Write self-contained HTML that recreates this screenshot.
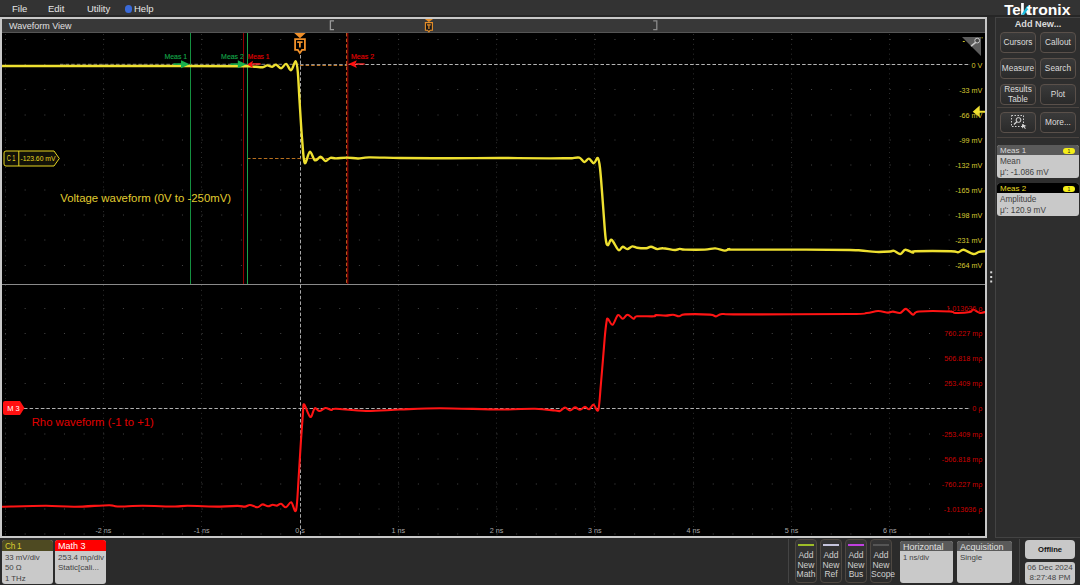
<!DOCTYPE html>
<html><head><meta charset="utf-8">
<style>
*{margin:0;padding:0;box-sizing:border-box}
html,body{width:1080px;height:585px;overflow:hidden;background:#2b2b2b;font-family:"Liberation Sans",sans-serif}
.a{position:absolute}
#menu{left:0;top:0;width:1080px;height:15px;background:#333}
#menu span{position:absolute;top:2.8px;font-size:9.5px;color:#e6e6e6;line-height:12px}
#wv{left:0;top:17px;width:987px;height:521px;background:#c8c8c8}
#title{left:2px;top:19px;width:983px;height:14px;background:#383838;border-bottom:1px solid #555}
#title span{position:absolute;left:7px;top:1px;font-size:9px;color:#e0e0e0;line-height:12px}
#plot{left:2px;top:33px;width:983px;height:503px;background:#000}
#rp{left:995px;top:17px;width:85px;height:521px;background:#2e2e2e;border:1px solid #434343;border-right:none}
.btn{position:absolute;width:36px;height:21px;border:1px solid #5a504a;border-radius:4px;background:linear-gradient(#3a3a3a,#2a2a2a);color:#dcdcdc;font-size:8.3px;text-align:center;line-height:19px}
.badge{position:absolute;background:#c9c9c9;border-radius:3px;overflow:hidden;color:#424242;font-size:8.2px;line-height:10px}
.badge .h{height:10px;padding-left:3px;line-height:10px;font-size:8px}
.badge .b{padding-left:3px}
.addb{position:absolute;top:539px;width:22px;height:44px;border:1px solid #4e4842;border-radius:4px;background:linear-gradient(#353535,#2b2b2b);color:#d0d0d0;font-size:8.5px;text-align:center;line-height:9.5px}
.addb i{display:block;height:2px;margin:3.5px 2px 5.5px 2px}
</style></head><body>
<div id="menu" class="a">
<span style="left:12px">File</span>
<span style="left:48px">Edit</span>
<span style="left:87px">Utility</span>
<span style="left:124.5px;top:5px;width:7.5px;height:7.5px;border-radius:50%;background:#3a6ad8"></span>
<span style="left:134px">Help</span>
</div>
<div class="a" style="left:0;top:15px;width:1080px;height:2px;background:#262626"></div>
<div id="wv" class="a"></div>
<div id="title" class="a"><span>Waveform View</span></div>
<div id="plot" class="a"></div>

<svg class="a" style="left:0;top:0" width="1080" height="585" viewBox="0 0 1080 585" font-family="Liberation Sans">
<defs><clipPath id="pc"><rect x="2" y="33" width="983" height="503"/></clipPath></defs>
<!-- title bar overview -->
<path d="M334 20.9h-3.6v8.8h3.6" fill="none" stroke="#9a9a9a" stroke-width="1.3"/>
<path d="M653.2 20.9h3.6v8.8h-3.6" fill="none" stroke="#8a8a8a" stroke-width="1.3"/>
<path d="M424.8 19h8.2l-4.1 3z" fill="#e8902a"/>
<path d="M425.4 22.6h7v7.6h-2.2l-1.3 1.6l-1.3-1.6h-2.2z" fill="#1a1a1a" stroke="#e8902a" stroke-width="1.1"/>
<path d="M427 24.3h3.8v1.2h-1.3v3.4h-1.2v-3.4h-1.3z" fill="#e8902a"/>
<g clip-path="url(#pc)">
<!-- vertical graticule dotted lines -->
<g stroke="#2e2e2e" stroke-width="1" stroke-dasharray="1 3.92">
<path d="M5.5 34V536M103.5 34V536M201.5 34V536M398.5 34V536M496.5 34V536M594.5 34V536M693.5 34V536M791.5 34V536M889.5 34V536"/>
</g>
<!-- horizontal dot rows -->
<g stroke="#474747" stroke-width="1" stroke-dasharray="1 18.66">
<path d="M5 39.5H985M5 64.5H985M5 89.5H985M5 115H985M5 140H985M5 165H985M5 190H985M5 215H985M5 240H985M5 265.5H985"/>
<path d="M5 308.5H985M5 333.5H985M5 358.5H985M5 383.5H985M5 408.5H985M5 434H985M5 459H985M5 484H985M5 509H985M5 534H985"/>
</g>
<!-- divider -->
<path d="M2 284.5H985" stroke="#8a8a8a" stroke-width="1.2"/>
<!-- trigger vertical dashed -->
<path d="M300.5 55V536" stroke="#a8a8a8" stroke-width="1" stroke-dasharray="3.5 2.1"/>
<!-- 0V dashed -->
<path d="M60 64.3H300" stroke="#808080" stroke-width="1" stroke-dasharray="3.5 2.1"/>
<path d="M348.5 64.5H968.6" stroke="#b4b4b4" stroke-width="1" stroke-dasharray="3.5 2.1"/>
<path d="M300 64.5H347" stroke="#8c8c8c" stroke-width="1" stroke-dasharray="3.5 2.1"/>
<path d="M300 65.5H347" stroke="#c07828" stroke-width="1.2" stroke-dasharray="3.5 2.1"/>
<path d="M247 158.5H345" stroke="#b8701f" stroke-width="1" stroke-dasharray="3.5 2.1"/>
<!-- 0 rho dashed -->
<path d="M24 408.5H969.5" stroke="#b0b0b0" stroke-width="1" stroke-dasharray="3.5 2.1"/>
<!-- meas gates -->
<path d="M190.5 33V284" stroke="#159040" stroke-width="1"/>
<path d="M243.5 33V284" stroke="#900000" stroke-width="1"/>
<path d="M247.5 33V284" stroke="#18a448" stroke-width="1"/>
<path d="M346.6 33V284" stroke="#c86020" stroke-width="1" stroke-dasharray="3.5 2.1"/>
<path d="M347.8 33V284" stroke="#c00000" stroke-width="0.9"/>
<!-- yellow waveform -->
<path fill="none" stroke="#eee030" stroke-width="2.4" stroke-linejoin="round" d="M2.0 66.0C13.3 66.0 40.3 66.0 70.0 66.0C99.7 66.0 150.8 66.0 180.0 66.0C209.2 66.0 233.3 66.1 245.0 66.2C256.7 66.3 248.2 66.3 250.0 66.4C251.8 66.5 253.9 66.7 256.0 66.8C258.1 66.9 260.9 67.4 262.8 67.2C264.7 67.0 265.6 65.5 267.2 65.4C268.8 65.3 270.7 66.8 272.2 66.7C273.7 66.6 274.6 64.3 276.1 64.6C277.6 64.9 279.4 68.4 281.1 68.3C282.8 68.2 284.4 63.6 286.1 63.9C287.8 64.2 289.5 70.7 291.1 70.2C292.7 69.8 294.5 60.9 295.6 61.2C296.7 61.5 297.2 65.5 297.8 72.0C298.4 78.5 298.8 89.0 299.5 100.0C300.2 111.0 301.1 127.5 302.0 138.0C302.9 148.5 303.4 160.7 304.7 163.0C306.0 165.3 308.1 152.2 309.8 151.8C311.5 151.4 313.2 159.5 315.0 160.3C316.8 161.1 318.9 156.7 320.6 156.8C322.4 156.9 323.9 160.9 325.5 161.1C327.1 161.3 328.6 158.2 330.4 157.8C332.1 157.4 333.2 158.4 336.0 158.4C338.8 158.4 343.3 157.6 347.0 157.6C350.7 157.6 354.3 158.5 358.0 158.5C361.7 158.5 362.0 157.5 369.0 157.4C376.0 157.3 386.5 157.8 400.0 158.0C413.5 158.2 433.3 158.3 450.0 158.3C466.7 158.3 483.3 158.0 500.0 158.0C516.7 158.0 538.7 158.4 550.0 158.4C561.3 158.4 564.3 158.2 568.0 158.2C571.7 158.2 570.1 158.3 572.0 158.2C573.9 158.1 577.2 157.0 579.3 157.6C581.4 158.2 582.8 161.8 584.4 162.0C586.0 162.2 587.3 158.4 588.9 158.6C590.5 158.8 592.3 163.3 593.8 163.2C595.3 163.1 596.8 157.2 597.8 158.0C598.8 158.8 599.1 160.2 600.0 168.0C600.9 175.8 602.1 193.3 603.0 205.0C603.9 216.7 604.8 231.3 605.6 238.0C606.4 244.7 606.9 244.9 607.9 245.2C608.9 245.5 609.8 239.1 611.6 239.9C613.4 240.7 616.6 248.8 618.5 250.0C620.4 251.2 621.2 247.0 622.7 246.8C624.2 246.7 625.7 249.2 627.3 249.1C628.9 249.0 630.8 246.6 632.4 246.4C634.0 246.2 634.7 247.4 637.0 247.7C639.3 248.0 644.0 248.3 646.3 248.2C648.6 248.0 649.1 246.7 651.0 246.8C652.9 247.0 655.4 248.9 657.4 249.1C659.4 249.3 660.1 248.0 663.0 248.2C665.9 248.3 672.2 249.9 675.0 250.0C677.8 250.1 677.9 249.0 679.6 248.9C681.3 248.8 680.8 249.5 685.0 249.6C689.2 249.7 699.8 249.8 704.8 249.6C709.8 249.4 711.9 248.2 715.2 248.4C718.5 248.6 722.4 250.5 724.8 250.6C727.1 250.7 727.7 249.3 729.3 249.1C730.9 248.9 722.6 249.5 734.4 249.6C746.2 249.7 780.7 249.5 800.0 249.6C819.3 249.7 839.8 249.8 850.0 250.0C860.2 250.2 856.7 250.2 861.0 250.5C865.3 250.8 871.2 251.7 876.0 251.9C880.8 252.1 887.0 251.7 890.0 251.5C893.0 251.3 892.3 250.4 894.0 250.8C895.7 251.2 898.5 254.2 900.4 254.0C902.3 253.8 903.2 250.0 905.3 249.8C907.4 249.6 911.4 252.4 913.0 252.6C914.6 252.8 908.7 251.4 915.0 251.2C921.3 251.0 943.8 251.0 951.0 251.2C958.2 251.4 955.9 252.5 958.0 252.3C960.1 252.1 961.1 249.5 963.6 249.8C966.1 250.1 970.7 253.7 973.3 254.0C975.9 254.3 976.9 252.4 979.0 251.9C981.1 251.4 984.8 251.3 986.0 251.2"/>
<!-- red waveform -->
<path fill="none" stroke="#ff1414" stroke-width="2.1" stroke-linejoin="round" d="M2.0 506.8C3.5 506.8 3.7 506.7 11.0 506.5C18.3 506.3 35.3 505.8 46.0 505.8C56.7 505.9 64.5 506.9 75.0 506.8C85.5 506.7 101.9 505.2 109.0 505.2C116.1 505.1 111.9 506.4 117.5 506.5C123.1 506.6 132.9 505.8 142.5 505.8C152.1 505.8 167.5 506.5 175.0 506.5C182.5 506.5 180.0 505.8 187.5 505.8C195.0 505.8 211.7 506.6 220.0 506.6C228.3 506.6 233.3 505.9 237.5 505.9C241.7 505.9 242.9 506.8 245.0 506.6C247.1 506.5 247.9 504.9 250.0 505.0C252.1 505.1 255.4 507.3 257.5 507.2C259.6 507.1 260.8 504.5 262.5 504.4C264.2 504.2 266.3 506.2 268.0 506.3C269.7 506.4 271.2 504.9 272.7 504.8C274.2 504.7 275.6 505.8 277.0 505.6C278.4 505.4 279.5 503.5 281.0 503.8C282.5 504.1 284.3 507.6 286.0 507.3C287.7 507.0 289.5 501.7 291.2 502.2C292.9 502.7 294.8 514.2 296.0 510.5C297.2 506.8 297.7 491.8 298.5 480.0C299.3 468.2 300.2 451.3 301.0 440.0C301.8 428.7 302.5 417.9 303.0 412.0C303.5 406.1 303.0 403.6 304.2 404.4C305.4 405.2 308.6 416.4 310.4 417.0C312.1 417.6 313.2 409.3 314.7 408.3C316.2 407.3 317.7 411.1 319.5 411.0C321.3 410.9 323.4 408.2 325.4 408.0C327.4 407.8 329.6 409.9 331.4 410.0C333.2 410.1 330.2 408.5 336.0 408.7C341.8 408.9 355.3 410.9 366.0 411.0C376.7 411.1 387.7 410.0 400.0 409.5C412.3 409.0 423.3 408.2 440.0 408.2C456.7 408.2 484.2 409.4 500.0 409.5C515.8 409.6 525.8 408.6 535.0 408.8C544.2 409.0 550.8 410.1 555.0 410.5C559.2 410.9 558.3 411.5 560.0 411.0C561.7 410.5 563.3 407.6 565.0 407.5C566.7 407.4 568.3 410.5 570.0 410.5C571.7 410.5 573.3 407.5 575.0 407.4C576.7 407.3 578.3 409.9 580.0 409.8C581.7 409.7 583.5 407.0 585.0 406.9C586.5 406.8 587.8 409.7 589.2 409.3C590.6 408.9 592.0 404.4 593.5 404.5C595.0 404.6 597.0 413.4 598.3 409.8C599.5 406.2 599.9 395.0 601.0 383.0C602.1 371.0 603.8 348.2 604.7 338.0C605.6 327.8 606.0 325.2 606.5 322.0C607.0 318.8 606.8 318.2 607.8 318.7C608.8 319.1 610.9 325.3 612.6 324.7C614.3 324.1 616.2 316.1 617.9 315.1C619.6 314.1 621.1 318.8 622.7 318.7C624.3 318.6 625.7 314.7 627.5 314.7C629.3 314.7 631.9 318.4 633.5 318.7C635.1 319.0 633.6 316.7 637.0 316.3C640.4 315.9 650.6 316.5 653.8 316.3C657.0 316.1 654.0 315.1 656.0 315.0C658.0 314.9 663.0 315.7 665.8 315.6C668.6 315.6 670.8 314.6 673.0 314.7C675.2 314.8 677.0 316.4 679.0 316.3C681.0 316.2 679.8 314.7 685.0 314.4C690.2 314.1 704.8 314.3 710.0 314.6C715.2 314.9 714.0 316.5 716.0 316.4C718.0 316.3 718.0 314.3 722.0 314.0C726.0 313.7 718.7 314.4 740.0 314.4C761.3 314.4 828.9 314.2 850.0 314.0C871.1 313.8 862.1 313.5 866.8 313.0C871.5 312.5 874.5 311.1 878.0 311.0C881.5 310.9 885.5 312.5 888.0 312.6C890.5 312.7 891.0 311.5 893.0 311.6C895.0 311.7 897.8 313.4 900.0 313.0C902.2 312.6 903.8 308.6 906.0 308.9C908.2 309.2 910.8 314.3 913.0 314.7C915.2 315.1 912.8 312.0 919.0 311.5C925.2 311.0 944.0 311.2 950.0 311.5C956.0 311.8 951.7 312.9 955.0 313.0C958.3 313.1 967.0 312.6 970.0 312.0C973.0 311.4 971.3 309.4 973.0 309.5C974.7 309.6 977.8 312.5 980.0 312.9C982.2 313.3 985.0 312.0 986.0 311.8"/>
</g>
<!-- meas markers -->
<g font-size="7.8" stroke-width="0.12">
<text x="164.4" y="58.6" fill="#14a84a" stroke="#14a84a" textLength="22.8" lengthAdjust="spacingAndGlyphs">Meas 1</text>
<text x="221.1" y="58.6" fill="#14a84a" stroke="#14a84a" textLength="22.8" lengthAdjust="spacingAndGlyphs">Meas 2</text>
<text x="247.8" y="58.6" fill="#e80000" stroke="#e80000" textLength="21.6" lengthAdjust="spacingAndGlyphs">Meas 1</text>
<text x="351" y="58.6" fill="#e80000" stroke="#e80000" textLength="23.1" lengthAdjust="spacingAndGlyphs">Meas 2</text>
</g>
<path d="M173.3 63.3H181.5V64.9H173.3z" fill="#18b04c"/>
<path d="M181 60.2L189.6 64.2L181 68.2z" fill="#18b04c"/>
<path d="M230.5 63.3H238.3V64.9H230.5z" fill="#18b04c"/>
<path d="M237.8 60.2L246.3 64.2L237.8 68.2z" fill="#18b04c"/>
<path d="M252.5 63.2H260.6V64.7H252.5z" fill="#ff2a2a"/>
<path d="M247.2 64.4L253 60.8L252 64.4L253 68z" fill="#ff1010"/>
<path d="M356 63.3H364.6V64.7H356z" fill="#ff3030"/>
<path d="M348.4 64L356.8 60.3L355.3 64L356.8 67.9z" fill="#ff1010"/>
<!-- trigger marker T -->
<path d="M294.2 33h11.5l-5.75 5.2z" fill="#f0902a"/>
<path d="M295.1 39.1h9.8v10.8h-2.9l-2.1 3l-2.1-3h-2.7z" fill="#000" stroke="#f0902a" stroke-width="1.8"/>
<path d="M297.2 41.3h5.4v1.7h-1.8v4.4h-1.8v-4.4h-1.8z" fill="#f0902a"/>
<!-- zoom triangle -->
<path d="M962 37H981V56z" fill="#5c5c5c"/>
<circle cx="977.2" cy="40.6" r="2.4" fill="#484848" stroke="#c8c8c8" stroke-width="1"/>
<path d="M975.4 42.6L971.4 45.8" stroke="#c8c8c8" stroke-width="1.5" stroke-linecap="round"/>
<path d="M962.8 41.5h2" stroke="#c8c020" stroke-width="1"/>
<path d="M981.5 37.8h1.2" stroke="#c8c020" stroke-width="1"/>
<!-- trigger level arrow -->
<path d="M985 110.7h-5.3v-5.2l-7 6.2l7 5.6v-4.6h5.3z" fill="#f0e030"/>
<!-- C1 label -->
<path d="M6 151h48l5.3 7.5l-5.3 7.5h-48a2 2 0 0 1-2-2v-11a2 2 0 0 1 2-2z" fill="#121208" stroke="#e6d420" stroke-width="1"/>
<path d="M18.8 151V166" stroke="#e6d420" stroke-width="1"/>
<text x="6.7" y="161.3" font-size="8.5" fill="#e6d420" textLength="8.8" lengthAdjust="spacingAndGlyphs">C 1</text>
<text x="20.4" y="161.3" font-size="8" fill="#e6d420" textLength="35.1" lengthAdjust="spacingAndGlyphs">-123.60 mV</text>
<!-- M3 label -->
<path d="M5 401h15l4.5 7l-4.5 7h-15a2 2 0 0 1-2-2v-10a2 2 0 0 1 2-2z" fill="#ff1010"/>
<text x="7.2" y="411" font-size="7.5" fill="#fff">M 3</text>
<!-- annotation texts -->
<text x="60.2" y="201.7" font-size="11.4" fill="#e0cc30">Voltage waveform (0V to -250mV)</text>
<text x="31.7" y="425.8" font-size="11.3" fill="#e00000">Rho waveform (-1 to +1)</text>
<!-- right labels upper -->
<g font-size="7.2" fill="#d8c830" text-anchor="end">
<text x="982.3" y="67.7">0 V</text>
<text x="982.3" y="92.7">-33 mV</text>
<text x="982.3" y="117.7">-66 mV</text>
<text x="982.3" y="142.7">-99 mV</text>
<text x="982.3" y="167.7">-132 mV</text>
<text x="982.3" y="192.7">-165 mV</text>
<text x="982.3" y="217.7">-198 mV</text>
<text x="982.3" y="242.7">-231 mV</text>
<text x="982.3" y="267.7">-264 mV</text>
</g>
<g font-size="7.2" fill="#cc0000" text-anchor="end">
<text x="982.3" y="311.4">1.013636 ρ</text>
<text x="982.3" y="336.4">760.227 mρ</text>
<text x="982.3" y="361.4">506.818 mρ</text>
<text x="982.3" y="386.4">253.409 mρ</text>
<text x="982.3" y="411.4">0 ρ</text>
<text x="982.3" y="436.7">-253.409 mρ</text>
<text x="982.3" y="461.7">-506.818 mρ</text>
<text x="982.3" y="486.7">-760.227 mρ</text>
<text x="982.3" y="511.7">-1.013636 ρ</text>
</g>
<g font-size="7.2" fill="#a8a8a8" text-anchor="middle">
<text x="103.4" y="533">-2 ns</text>
<text x="201.7" y="533">-1 ns</text>
<text x="300" y="533">0 s</text>
<text x="398.3" y="533">1 ns</text>
<text x="496.6" y="533">2 ns</text>
<text x="594.9" y="533">3 ns</text>
<text x="693.2" y="533">4 ns</text>
<text x="791.5" y="533">5 ns</text>
<text x="889.8" y="533">6 ns</text>
</g>
<!-- vertical ellipsis -->
<g fill="#d8d8d8"><rect x="990.2" y="271.3" width="2" height="2"/><rect x="990.2" y="276" width="2" height="2"/><rect x="990.2" y="280.5" width="2" height="2"/></g>
</svg>

<!-- logo -->
<svg class="a" style="left:1000px;top:0" width="80" height="17" viewBox="1000 0 80 17" font-family="Liberation Sans" font-weight="bold">
<text x="1004.2" y="14.8" font-size="15.5" fill="#fff" textLength="16.6" lengthAdjust="spacingAndGlyphs">Te</text>
<rect x="1021.1" y="3" width="2.7" height="11.8" fill="#fff"/>
<path d="M1025.2 10.2L1027.8 9.2L1030.4 14.8H1027.2z" fill="#fff"/>
<path d="M1021.3 14.8H1024.3L1030.2 5.9H1027.2z" fill="#1cbce0"/>
<text x="1026.8" y="14.8" font-size="15.5" fill="#fff" textLength="43.6" lengthAdjust="spacingAndGlyphs">tronix</text>
</svg>
<div id="rp" class="a"></div>
<div class="a" style="left:996px;top:18px;width:84px;text-align:center;font-size:9.2px;font-weight:bold;color:#dadada;line-height:12px">Add New...</div>
<div class="btn" style="left:1000px;top:32px">Cursors</div>
<div class="btn" style="left:1040px;top:32px">Callout</div>
<div class="btn" style="left:1000px;top:58px">Measure</div>
<div class="btn" style="left:1040px;top:58px">Search</div>
<div class="btn" style="left:1000px;top:84px;line-height:9.5px;padding-top:0px">Results<br>Table</div>
<div class="btn" style="left:1040px;top:84px">Plot</div>
<div class="a" style="left:997px;top:107px;width:82px;height:1px;background:#4a4440"></div>
<div class="btn" style="left:1000px;top:112px"></div>
<div class="btn" style="left:1040px;top:112px">More...</div>
<div class="a" style="left:997px;top:137px;width:82px;height:1px;background:#4a4440"></div>
<svg class="a" style="left:1010px;top:114px" width="18" height="16" viewBox="0 0 18 16">
<rect x="1.5" y="1.5" width="12" height="11" fill="none" stroke="#cfcfcf" stroke-width="1" stroke-dasharray="1.5 1.5"/>
<circle cx="8.5" cy="6" r="2.4" fill="none" stroke="#dcdcdc" stroke-width="1"/>
<path d="M6.8 7.8L4 10.5" stroke="#dcdcdc" stroke-width="1.2"/>
<path d="M12 10l4.5 2l-2 0.6l1.3 2l-0.8 0.5l-1.3-2l-1.5 1.3z" fill="#dcdcdc"/>
</svg>
<!-- meas badges -->
<div class="badge" style="left:997px;top:145px;width:82px;height:33px">
<div class="h" style="background:#5a5a5a;color:#dcdcdc;padding-top:1.2px">Meas 1</div>
<div class="b" style="margin-top:1.8px">Mean</div>
<div class="b" style="margin-top:1px">μ': -1.086 mV</div>
</div>
<div class="a" style="left:1063px;top:147.5px;width:12px;height:6px;border-radius:3px;background:#f4ee18;font-size:5px;line-height:6px;text-align:center;color:#222">1</div>
<div class="badge" style="left:997px;top:183px;width:82px;height:33px">
<div class="h" style="background:#000;color:#e8dc20;padding-top:1px">Meas 2</div>
<div class="b" style="margin-top:1.5px">Amplitude</div>
<div class="b" style="margin-top:1px">μ': 120.9 mV</div>
</div>
<div class="a" style="left:1063px;top:185.5px;width:12px;height:6px;border-radius:3px;background:#f4ee18;font-size:5px;line-height:6px;text-align:center;color:#222">1</div>

<!-- bottom bar -->
<div class="badge" style="left:2px;top:540px;width:51px;height:44px">
<div class="h" style="background:#4e4a22;color:#dccf30;height:11px;line-height:11px;font-size:8.3px;letter-spacing:-0.3px;padding-top:1px">Ch 1</div>
<div class="b" style="margin-top:1.5px;line-height:10.5px;font-size:7.8px">33 mV/div</div>
<div class="b" style="line-height:10.5px;font-size:7.8px">50 Ω</div>
<div class="b" style="line-height:10.5px;font-size:7.8px">1 THz</div>
</div>
<div class="badge" style="left:55px;top:540px;width:51px;height:44px">
<div class="h" style="background:#ff0000;color:#fff;height:11px;line-height:11px;font-size:9px;padding-top:0.5px">Math 3</div>
<div class="b" style="margin-top:1.5px;line-height:10.5px;font-size:8px">253.4 mρ/div</div>
<div class="b" style="line-height:10.5px;font-size:8px">Static[cali...</div>
</div>
<div class="a" style="left:788px;top:539px;width:1px;height:44px;background:#444"></div>
<div class="addb" style="left:795px"><i style="background:#9cbc28"></i>Add<br>New<br>Math</div>
<div class="addb" style="left:820px"><i style="background:#c4c4dc"></i>Add<br>New<br>Ref</div>
<div class="addb" style="left:845px"><i style="background:#c040e0"></i>Add<br>New<br>Bus</div>
<div class="addb" style="left:870px"><i style="background:#555"></i>Add<br>New<br>Scope</div>
<div class="badge" style="left:900px;top:541px;width:53px;height:42px">
<div class="h" style="background:#5a5a5a;color:#e0e0e0;font-size:9px;padding-top:0.5px">Horizontal</div>
<div class="b" style="margin-top:1.5px;font-size:7.6px">1 ns/div</div>
</div>
<div class="badge" style="left:957px;top:541px;width:55px;height:42px">
<div class="h" style="background:#5a5a5a;color:#e0e0e0;font-size:9px;padding-top:0.5px">Acquisition</div>
<div class="b" style="margin-top:1.5px;font-size:8px">Single</div>
</div>
<div class="a" style="left:1019px;top:539px;width:1px;height:44px;background:#444"></div>
<div class="a" style="left:1025px;top:540px;width:50px;height:19px;background:#c8c8c8;border-radius:4px;color:#111;font-size:7.6px;font-weight:bold;text-align:center;line-height:19px">Offline</div>
<div class="a" style="left:1025px;top:562px;width:50px;height:22px;background:#c8c8c8;border-radius:3px;color:#444;font-size:8px;text-align:center;line-height:9.5px;padding-top:1px">06 Dec 2024<br>8:27:48 PM</div>
</body></html>
